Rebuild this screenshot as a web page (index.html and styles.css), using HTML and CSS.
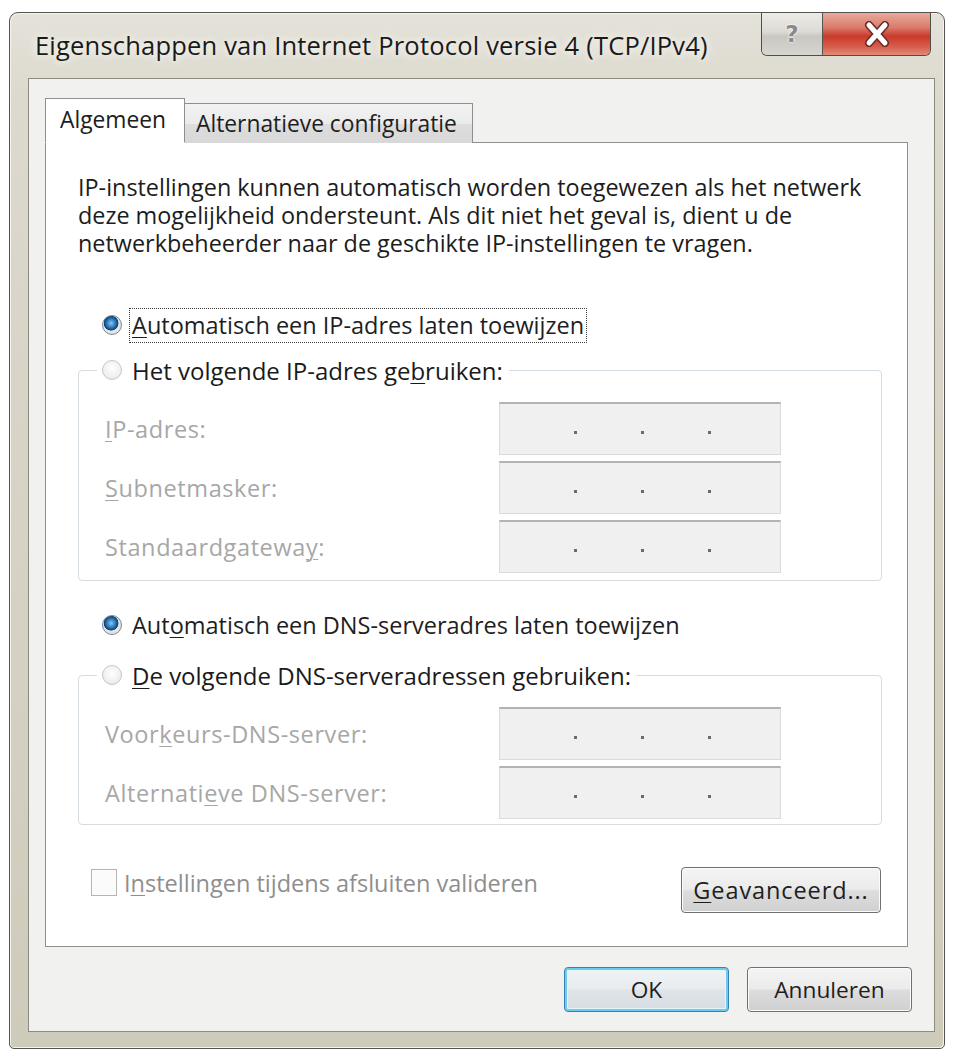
FILE: index.html
```html
<!DOCTYPE html>
<html lang="nl">
<head>
<meta charset="utf-8">
<title>Eigenschappen van Internet Protocol versie 4 (TCP/IPv4)</title>
<link rel="stylesheet" href="styles.css">
</head>
<body>
<div class="window">
  <div class="titlebar">
    <div class="title">Eigenschappen van Internet Protocol versie 4 (TCP/IPv4)</div>
    <div class="caption-btns">
      <div class="cbtn help"><span class="qmark">?</span></div>
      <div class="cbtn close">
        <svg width="30" height="26" viewBox="0 0 30 26">
          <path d="M7 4 L23 22 M23 4 L7 22" stroke="#6b2b25" stroke-width="8" stroke-linecap="round"/>
          <path d="M7 4 L23 22 M23 4 L7 22" stroke="#ffffff" stroke-width="5" stroke-linecap="round"/>
        </svg>
      </div>
    </div>
  </div>
  <div class="client">
    <div class="tabs">
      <div class="tab active">Algemeen</div>
      <div class="tab">Alternatieve configuratie</div>
    </div>
    <div class="panel">
      <p class="desc">IP-instellingen kunnen automatisch worden toegewezen als het netwerk deze mogelijkheid ondersteunt. Als dit niet het geval is, dient u de netwerkbeheerder naar de geschikte IP-instellingen te vragen.</p>

      <div class="radio-row row-auto-ip">
        <span class="radio checked"></span>
        <span class="focus"><u>A</u>utomatisch een IP-adres laten toewijzen</span>
      </div>

      <fieldset class="group group-ip">
        <legend class="radio-row"><span class="radio"></span><span class="gl">Het volgende IP-adres ge<u>b</u>ruiken:</span></legend>
        <div class="fields">
          <div class="field"><span class="flabel"><u>I</u>P-adres:</span><div class="ipbox"><i></i><i></i><i></i></div></div>
          <div class="field"><span class="flabel"><u>S</u>ubnetmasker:</span><div class="ipbox"><i></i><i></i><i></i></div></div>
          <div class="field"><span class="flabel">Standaardgatewa<u>y</u>:</span><div class="ipbox"><i></i><i></i><i></i></div></div>
        </div>
      </fieldset>

      <div class="radio-row row-auto-dns">
        <span class="radio checked"></span>
        <span class="rl">Aut<u>o</u>matisch een DNS-serveradres laten toewijzen</span>
      </div>

      <fieldset class="group group-dns">
        <legend class="radio-row"><span class="radio"></span><span class="gl"><u>D</u>e volgende DNS-serveradressen gebruiken:</span></legend>
        <div class="fields">
          <div class="field"><span class="flabel">Voor<u>k</u>eurs-DNS-server:</span><div class="ipbox"><i></i><i></i><i></i></div></div>
          <div class="field"><span class="flabel">Alternati<u>e</u>ve DNS-server:</span><div class="ipbox"><i></i><i></i><i></i></div></div>
        </div>
      </fieldset>

      <div class="panel-footer">
        <div class="check-row">
          <span class="checkbox"></span>
          <span class="clabel">I<u>n</u>stellingen tijdens afsluiten valideren</span>
        </div>
        <button class="btn adv"><u>G</u>eavanceerd...</button>
      </div>
    </div>
    <div class="buttons">
      <button class="btn ok">OK</button>
      <button class="btn">Annuleren</button>
    </div>
  </div>
</div>
</body>
</html>
```
FILE: styles.css
```css
html, body {
  margin: 0;
  padding: 0;
  background: #ffffff;
}
body {
  font-family: "Open Sans", "Noto Sans", sans-serif;
  font-size: 23.5px;
  letter-spacing: 0;
  color: #1e1e1e;
}
u { text-decoration-thickness: 1px; text-underline-offset: 3px; }

.window {
  box-sizing: border-box;
  margin: 12px 0 0 9px;
  width: 936px;
  height: 1037px;
  border: 1px solid #55554f;
  border-radius: 9px 9px 5px 5px;
  background: linear-gradient(180deg, #e4e2da 0%, #dcd9cd 8%, #d6d3c5 50%, #cfcbbb 100%);
  padding: 0 0 0 18px;
  box-shadow: inset 1px 1px 0 #f4f3ee, inset -1px -1px 0 #f4f3ee;
}
.titlebar {
  height: 65px;
  display: flex;
  align-items: flex-start;
}
.title {
  flex: 1;
  padding-left: 7px;
  margin-top: 15px;
  font-size: 25.5px;
  letter-spacing: 0.2px;
  color: #1a1a1a;
  line-height: 34px;
  white-space: nowrap;
  text-shadow: 0 0 6px #f6f5f0, 0 0 10px #f6f5f0;
}
.caption-btns {
  display: flex;
  margin-right: 13px;
  border: 1px solid #4f4f4a;
  border-top: none;
  border-radius: 0 0 6px 6px;
  overflow: hidden;
  height: 42px;
}
.cbtn {
  display: flex;
  align-items: center;
  justify-content: center;
  height: 100%;
}
.help {
  width: 60px;
  background: linear-gradient(180deg, #ecebe7 0%, #dcdad4 45%, #c9c7c0 55%, #d7d5cf 100%);
  border-right: 1px solid #55554f;
}
.qmark {
  font-family: "DejaVu Sans", sans-serif;
  font-weight: bold;
  font-size: 23px;
  color: #8a8a8e;
  letter-spacing: 0;
  text-shadow: 0 0 2px #ffffff, 0 0 2px #ffffff;
}
.close {
  width: 107px;
  background: linear-gradient(180deg, #e7aa9c 0%, #da7a6b 35%, #c93a2b 55%, #d75c4b 80%, #e48a78 100%);
}

.client {
  box-sizing: border-box;
  width: 907px;
  height: 954px;
  border: 1px solid #8d8b80;
  background: #f1f1f0;
  padding: 19px 0 0 16px;
}

.tabs {
  display: flex;
  align-items: flex-end;
  height: 45px;
  position: relative;
  z-index: 1;
  margin-bottom: -1px;
}
.tab {
  box-sizing: border-box;
  height: 40px;
  line-height: 40px;
  padding: 0 11px;
  border: 1px solid #8e8f8f;
  border-bottom: none;
  background: linear-gradient(180deg, #f2f2f2 0%, #ebebeb 50%, #dddddd 51%, #d8d8d8 100%);
  font-size: 22.8px;
  letter-spacing: 0;
  width: 289px;
  margin-left: -1px;
  white-space: nowrap;
}
.tab.active {
  width: 140px;
  height: 45px;
  line-height: 42px;
  background: #ffffff;
  margin-left: 0;
  padding: 0 14px;
  z-index: 2;
  position: relative;
  border-bottom: 1px solid #ffffff;
  color: #202020;
}

.panel {
  box-sizing: border-box;
  width: 863px;
  height: 805px;
  border: 1px solid #8e8f8f;
  background: #ffffff;
  padding: 0;
  display: flex;
  flex-direction: column;
}
.desc {
  margin: 30px 40px 0 32px;
  line-height: 28px;
  font-size: 23.4px;
  letter-spacing: 0;
  color: #1c1c1c;
}

.radio-row {
  display: flex;
  align-items: center;
  height: 34px;
  white-space: nowrap;
}
.row-auto-ip { margin: 51px 0 0 56px; }
.row-auto-dns { margin: 27px 0 0 56px; }
.rl { margin-left: 10px; }

.radio {
  box-sizing: border-box;
  width: 20px;
  height: 20px;
  border-radius: 50%;
  border: 1px solid #c4c8cc;
  background: radial-gradient(circle at 50% 40%, #ffffff 0%, #f0f0f0 60%, #dcdcdc 100%);
  flex: none;
}
.radio.checked {
  border: 1px solid #7b8a98;
  background:
    radial-gradient(circle at 45% 40%, #8dc5ec 0%, #2a78b8 30%, #0d3f73 48%, transparent 52%),
    radial-gradient(circle, #f3f3f3 0%, #d6d9dc 100%);
}
.focus {
  margin-left: 8px;
  padding: 3px 2px 4px 2px;
  outline: 1px dotted #3a3a3a;
  line-height: 26px;
}

.group {
  margin: 11px 25px 0 32px;
  padding: 0;
  border: 1px solid #d6dde2;
  border-radius: 4px;
  min-width: 0;
}
.group legend {
  margin-left: 18px;
  padding: 0 6px 0 5px;
}
.group legend .radio {
  margin-right: 10px;
}
.gl { color: #1a1a1a; font-size: 24px; }
.group-dns { margin-top: 16px; }

.fields {
  display: flex;
  flex-direction: column;
  gap: 6px;
  padding: 15px 0 7px 26px;
}
.group-dns .fields { padding-bottom: 5px; }
.field {
  display: flex;
  align-items: center;
  height: 53px;
}
.flabel {
  width: 394px;
  color: #a7a7a7;
  font-size: 23.5px;
  letter-spacing: 0.6px;
  white-space: nowrap;
}
.ipbox {
  box-sizing: border-box;
  width: 282px;
  height: 53px;
  border: 1px solid #dadada;
  border-top: 2px solid #b3b3b3;
  background: #f0f0f0;
  display: flex;
  align-items: center;
  padding: 6px 0 0 74px;
  gap: 64px;
}
.ipbox i {
  display: block;
  width: 3px;
  height: 3px;
  background: #6a6a6a;
}

.panel-footer {
  display: flex;
  justify-content: space-between;
  align-items: flex-start;
  margin: 42px 26px 0 45px;
}
.check-row {
  display: flex;
  align-items: center;
  margin-top: 2px;
  height: 27px;
  white-space: nowrap;
}
.checkbox {
  box-sizing: border-box;
  width: 26px;
  height: 27px;
  border: 1px solid #b5b5b5;
  background: #fbfbfb;
  flex: none;
}
.clabel {
  margin-left: 7px;
  color: #8e8e8e;
  letter-spacing: 0;
}

.btn {
  box-sizing: border-box;
  font-family: "Open Sans", "Noto Sans", sans-serif;
  font-size: 22.7px;
  letter-spacing: 0;
  color: #1e1e1e;
  border: 1px solid #707070;
  border-radius: 4px;
  background: linear-gradient(180deg, #f4f4f4 0%, #ebebeb 48%, #dddddd 52%, #d0d0d0 100%);
  box-shadow: inset 0 0 0 1px #fbfbfb;
  padding: 0;
  cursor: default;
  white-space: nowrap;
}
.adv {
  width: 200px;
  height: 46px;
  font-size: 23.5px;
  letter-spacing: 0.9px;
}
.buttons {
  display: flex;
  justify-content: flex-end;
  gap: 18px;
  margin: 20px 22px 0 0;
}
.buttons .btn {
  width: 165px;
  height: 45px;
}
.buttons .btn.ok {
  border: 1px solid #3c7fb1;
  box-shadow: inset 0 0 0 2px #6ccbee, inset 0 0 0 3px #e4f4fb;
  background: linear-gradient(180deg, #f2f4f5 0%, #e8ecef 48%, #dfe4e8 52%, #d6dde2 100%);
}
```
